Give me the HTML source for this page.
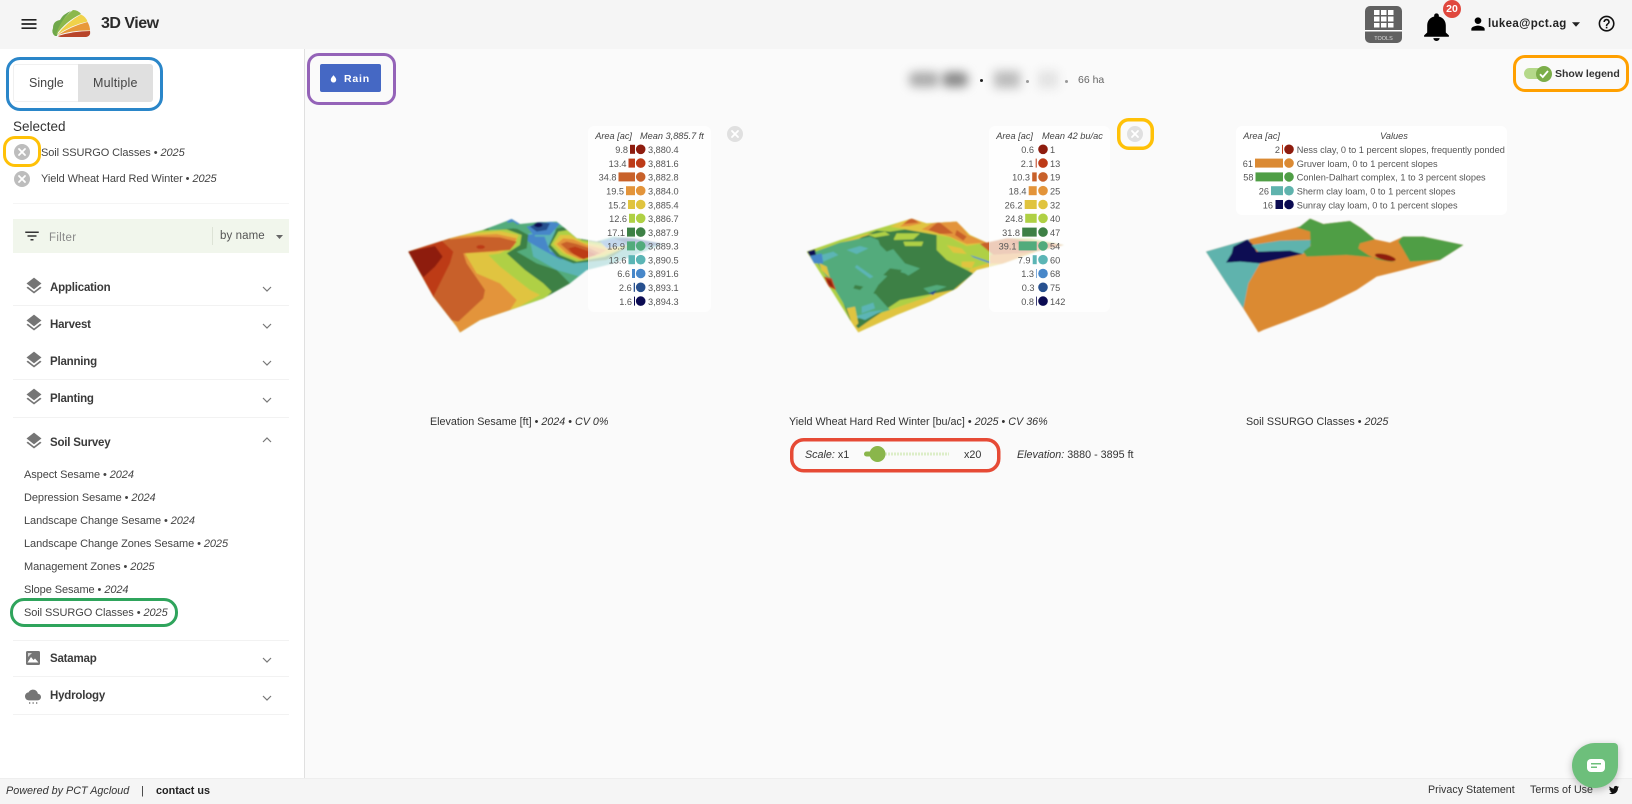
<!DOCTYPE html>
<html lang="en"><head><meta charset="utf-8"><title>3D View</title>
<style>
html,body{margin:0;padding:0}
body{width:1632px;height:804px;position:relative;overflow:hidden;background:#fafafa;font-family:"Liberation Sans",Arial,sans-serif;color:#333}
.a{position:absolute;white-space:nowrap;line-height:1}
svg{position:absolute;display:block}
.sec{font-size:11.5px;font-weight:bold;color:#3a3a3a;left:50px;letter-spacing:-.2px}
.it{font-size:11px;color:#444;left:24px;letter-spacing:-.08px}
.hr{position:absolute;left:13px;width:276px;height:1px;background:#f2f2f2}
.hl{position:absolute;box-sizing:border-box;border-style:solid;border-width:3.5px;background:transparent}
.cap{font-size:10.75px;color:#333}
i{font-style:italic}
</style></head><body>
<div class="a" style="left:0;top:0;width:1632px;height:49px;background:#f5f5f5"></div>
<div class="a" style="left:0;top:49px;width:304px;height:729px;background:#fff;border-right:1px solid #e0e0e0"></div>
<div class="a" style="left:0;top:778px;width:1632px;height:26px;background:#f5f5f5;border-top:1px solid #eee;box-sizing:border-box"></div>

<!-- header -->
<svg style="left:18.500px;top:14px" width="20" height="20" viewBox="0 0 24 24"><path fill="#222" d="M3 18h18v-2H3v2zm0-5h18v-2H3v2zm0-7v2h18V6H3z"/></svg>
<svg style="left:50px;top:8px" width="44" height="32" viewBox="50 8 44 32">
<path fill="#6fa84a" d="M55 36Q51 33 53 28Q53 21 60 20Q63 14 71 11Q60 21 57 36Z"/>
<path fill="#8cb84b" d="M56 35Q60 20 73 10Q78 10 81 14Q66 21 56 35Z"/>
<path fill="#f0d24a" d="M57 35Q67 22 81 14.500Q86 17 87.500 21.500Q71 25 57 35Z"/>
<path fill="#e8993a" d="M58 35Q72 26 87.500 22Q90 26 90 30.500Q72 30 58 35Z"/>
<path fill="#b8452a" d="M58 36Q74 31 90 31Q91 36 86 37L62 37Q59 37 58 36Z"/>
</svg>
<div class="a" style="left:101px;top:16px;font-size:16px;font-weight:bold;color:#2b2b2b;letter-spacing:-.5px">3D View</div>

<div class="a" style="left:1365px;top:6px;width:37px;height:37px;background:#616161;border-radius:5px"></div>
<svg style="left:1365px;top:6px" width="37" height="37" viewBox="0 0 37 37"><g fill="#fff"><rect x="9" y="4" width="5.500" height="5"/><rect x="16" y="4" width="5.500" height="5"/><rect x="23" y="4" width="5.500" height="5"/><rect x="9" y="10.500" width="5.500" height="5"/><rect x="16" y="10.500" width="5.500" height="5"/><rect x="23" y="10.500" width="5.500" height="5"/><rect x="9" y="17" width="5.500" height="4.500"/><rect x="16" y="17" width="5.500" height="4.500"/><rect x="23" y="17" width="5.500" height="4.500"/><rect x="0" y="24" width="37" height="1.500"/></g><text x="18.500" y="34" text-anchor="middle" font-size="5.500" fill="#ddd" font-family="Liberation Sans">TOOLS</text></svg>
<svg style="left:1421px;top:12px" width="31" height="29" viewBox="2 1.500 20 20.500" preserveAspectRatio="none"><path fill="#000" d="M12 22c1.100 0 2-.9 2-2h-4c0 1.100.89 2 2 2zm6-6v-5c0-3.070-1.640-5.640-4.500-6.320V4c0-.83-.67-1.500-1.500-1.500s-1.500.67-1.500 1.500v.68C7.630 5.360 6 7.920 6 11v5l-2 2v1h16v-1l-2-2z"/></svg>
<div class="a" style="left:1443px;top:0;width:18px;height:18px;border-radius:50%;background:#e0483e;color:#fff;font-size:10.500px;font-weight:bold;line-height:18px;text-align:center">20</div>
<svg style="left:1468px;top:14px" width="20" height="20" viewBox="0 0 24 24"><path fill="#000" d="M12 12c2.210 0 4-1.790 4-4s-1.790-4-4-4-4 1.790-4 4 1.790 4 4 4zm0 2c-2.670 0-8 1.340-8 4v2h16v-2c0-2.660-5.330-4-8-4z"/></svg>
<div class="a" style="left:1488px;top:19px;font-size:11.500px;font-weight:bold;color:#222;letter-spacing:.35px">lukea@pct.ag</div>
<svg style="left:1572px;top:22px" width="8" height="5" viewBox="0 0 9 5"><path fill="#222" d="M0 0h9L4.500 5z"/></svg>
<svg style="left:1597.400px;top:14.400px" width="19.200" height="19.200" viewBox="0 0 24 24"><path fill="#111" d="M11 18h2v-2h-2v2zm1-16C6.480 2 2 6.480 2 12s4.480 10 10 10 10-4.480 10-10S17.520 2 12 2zm0 18c-4.410 0-8-3.590-8-8s3.590-8 8-8 8 3.590 8 8-3.590 8-8 8zm0-14c-2.210 0-4 1.790-4 4h2c0-1.100.9-2 2-2s2 .9 2 2c0 2-3 1.750-3 5h2c0-2.250 3-2.500 3-5 0-2.210-1.790-4-4-4z"/></svg>

<!-- sidebar top -->
<div class="a" style="left:13px;top:64px;width:140px;height:38px;background:#fff;border:1px solid #f0f0f0;box-sizing:border-box;border-radius:3px"></div>
<div class="a" style="left:78px;top:64px;width:75px;height:38px;background:#e0e0e0;border-radius:0 3px 3px 0"></div>
<div class="a" style="left:29px;top:77px;font-size:12.500px;color:#444">Single</div>
<div class="a" style="left:93px;top:77px;font-size:12.500px;color:#444;letter-spacing:.2px">Multiple</div>
<div class="hl" style="left:6px;top:57px;width:157px;height:54px;border-color:#2a86c9;border-radius:14px"></div>
<div class="a" style="left:13px;top:120px;font-size:13.500px;color:#333">Selected</div>
<svg style="left:14px;top:144px" width="16" height="16" viewBox="0 0 16 16"><circle cx="8" cy="8" r="8" fill="#bdbdbd"/><path d="M5 5l6 6M11 5l-6 6" stroke="#fff" stroke-width="1.800" stroke-linecap="round"/></svg>
<svg style="left:14px;top:171px" width="16" height="16" viewBox="0 0 16 16"><circle cx="8" cy="8" r="8" fill="#bdbdbd"/><path d="M5 5l6 6M11 5l-6 6" stroke="#fff" stroke-width="1.800" stroke-linecap="round"/></svg>
<div class="hl" style="left:3px;top:136px;width:38px;height:31px;border-color:#ffc107;border-radius:12px"></div>
<div class="a it" style="left:41px;top:147.500px;color:#444">Soil SSURGO Classes • <i>2025</i></div>
<div class="a it" style="left:41px;top:173.500px;color:#444">Yield Wheat Hard Red Winter • <i>2025</i></div>
<div class="hr" style="top:203px;background:#f5f5f5"></div>
<div class="a" style="left:13px;top:219px;width:276px;height:34px;background:#f1f6ec"></div>
<svg style="left:22.750px;top:226.500px" width="18" height="18" viewBox="0 0 24 24"><path fill="#333" d="M10 18h4v-2h-4v2zM3 6v2h18V6H3zm3 7h12v-2H6v2z"/></svg>
<div class="a" style="left:49px;top:233px;font-size:11.500px;color:#888;letter-spacing:.3px">Filter</div>
<div class="a" style="left:212px;top:227px;width:1px;height:18px;background:#dde3d6"></div>
<div class="a" style="left:220px;top:231px;font-size:11.500px;color:#555;letter-spacing:.1px">by name</div>
<svg style="left:276px;top:235px" width="7" height="4" viewBox="0 0 7 4"><path fill="#666" d="M0 0h7L3.500 4z"/></svg>

<!-- sections -->
<svg width="0" height="0" style="left:0;top:0"><defs>
<path id="ly" fill="#757575" d="M11.990 18.540l-7.370-5.730L3 14.070l9 7 9-7-1.630-1.270-7.380 5.740zM12 16l7.360-5.730L21 9l-9-7-9 7 1.630 1.270L12 16z"/>
<path id="dn" fill="none" stroke="#777" stroke-width="1.200" d="M1 1l4 4 4-4"/>
</defs></svg>
<svg style="left:23.500px;top:276px" width="20" height="20" viewBox="0 0 24 24"><use href="#ly"/></svg><div class="a sec" style="top:282.500px">Application</div><svg style="left:262px;top:286px" width="10" height="7" viewBox="0 0 10 7"><use href="#dn"/></svg><div class="hr" style="top:305px"></div>
<svg style="left:23.500px;top:313px" width="20" height="20" viewBox="0 0 24 24"><use href="#ly"/></svg><div class="a sec" style="top:319.500px">Harvest</div><svg style="left:262px;top:323px" width="10" height="7" viewBox="0 0 10 7"><use href="#dn"/></svg>
<svg style="left:23.500px;top:350px" width="20" height="20" viewBox="0 0 24 24"><use href="#ly"/></svg><div class="a sec" style="top:356.500px">Planning</div><svg style="left:262px;top:360px" width="10" height="7" viewBox="0 0 10 7"><use href="#dn"/></svg><div class="hr" style="top:379px"></div>
<svg style="left:23.500px;top:387px" width="20" height="20" viewBox="0 0 24 24"><use href="#ly"/></svg><div class="a sec" style="top:393.500px">Planting</div><svg style="left:262px;top:397px" width="10" height="7" viewBox="0 0 10 7"><use href="#dn"/></svg><div class="hr" style="top:417px"></div>
<svg style="left:23.500px;top:431px" width="20" height="20" viewBox="0 0 24 24"><use href="#ly"/></svg><div class="a sec" style="top:437.500px">Soil Survey</div><svg style="left:262px;top:436px" width="10" height="7" viewBox="0 0 10 7"><path fill="none" stroke="#777" stroke-width="1.200" d="M1 6l4-4 4 4"/></svg>

<div class="a it" style="top:470px">Aspect Sesame • <i>2024</i></div>
<div class="a it" style="top:493px">Depression Sesame • <i>2024</i></div>
<div class="a it" style="top:516px">Landscape Change Sesame • <i>2024</i></div>
<div class="a it" style="top:539px">Landscape Change Zones Sesame • <i>2025</i></div>
<div class="a it" style="top:562px">Management Zones • <i>2025</i></div>
<div class="a it" style="top:585px">Slope Sesame • <i>2024</i></div>
<div class="a it" style="top:607.500px">Soil SSURGO Classes • <i>2025</i></div>
<div class="hl" style="left:10px;top:598px;width:168px;height:29px;border-color:#2fa45c;border-radius:14px"></div>
<div class="hr" style="top:640px"></div>
<svg style="left:26px;top:651px" width="14" height="14" viewBox="0 0 14 14"><rect width="14" height="14" rx="1.500" fill="#757575"/><path fill="#fff" d="M1.500 11.500L5 6l2.500 3 1.500-1.500 3.500 4z"/><path fill="#fff" d="M2 2h4L2 6z" opacity=".7"/></svg>
<div class="a sec" style="top:653.500px">Satamap</div><svg style="left:262px;top:657px" width="10" height="7" viewBox="0 0 10 7"><use href="#dn"/></svg><div class="hr" style="top:676px"></div>
<svg style="left:25px;top:687px" width="16" height="16" viewBox="0 0 24 24"><path fill="#757575" d="M19.350 10.040C18.670 6.590 15.640 4 12 4 9.110 4 6.600 5.640 5.350 8.040 2.340 8.360 0 10.910 0 14c0 3.310 2.690 6 6 6h13c2.760 0 5-2.240 5-5 0-2.640-2.050-4.780-4.650-4.960z"/></svg>
<svg style="left:29px;top:702px" width="9" height="3" viewBox="0 0 9 3"><g fill="#999"><rect x="0" width="1.300" height="2"/><rect x="3.500" width="1.300" height="2"/><rect x="7" width="1.300" height="2"/></g></svg>
<div class="a sec" style="top:690.500px">Hydrology</div><svg style="left:262px;top:695px" width="10" height="7" viewBox="0 0 10 7"><use href="#dn"/></svg><div class="hr" style="top:714px"></div>

<!-- footer -->
<div class="a" style="left:6px;top:786px;font-size:10.800px;font-style:italic;color:#333">Powered by PCT Agcloud</div>
<div class="a" style="left:141px;top:786px;font-size:11px;color:#333">|</div>
<div class="a" style="left:156px;top:786px;font-size:10.800px;font-weight:bold;color:#222">contact us</div>
<div class="a" style="left:1428px;top:785px;font-size:10.700px;color:#333">Privacy Statement</div>
<div class="a" style="left:1530px;top:785px;font-size:10.700px;color:#333">Terms of Use</div>
<svg style="left:1609px;top:785px" width="10" height="10" viewBox="0 0 24 24"><path fill="#111" d="M23.953 4.570a10 10 0 01-2.825.775 4.958 4.958 0 002.163-2.723c-.951.555-2.005.959-3.127 1.184a4.920 4.920 0 00-8.384 4.482C7.690 8.095 4.067 6.130 1.640 3.162a4.822 4.822 0 00-.666 2.475c0 1.710.870 3.213 2.188 4.096a4.904 4.904 0 01-2.228-.616v.060a4.923 4.923 0 003.946 4.827 4.996 4.996 0 01-2.212.085 4.936 4.936 0 004.604 3.417 9.867 9.867 0 01-6.102 2.105c-.39 0-.779-.023-1.170-.067a13.995 13.995 0 007.557 2.209c9.053 0 13.998-7.496 13.998-13.985 0-.21 0-.42-.015-.63A9.935 9.935 0 0024 4.590z"/></svg>

<!-- main top -->
<div class="a" style="left:320px;top:64px;width:61px;height:28px;background:#4568c4;border-radius:2px"></div>
<svg style="left:330px;top:75px" width="7" height="8" viewBox="0 0 9 10"><path fill="#fff" d="M4.500 0C3 2 1 3.800 1 6a3.500 3.500 0 007 0C8 3.800 6 2 4.500 0z"/></svg>
<div class="a" style="left:344px;top:73.500px;font-size:10.500px;font-weight:bold;color:#fff;letter-spacing:.8px">Rain</div>
<div class="hl" style="left:307px;top:53px;width:89px;height:52px;border-color:#9463b8;border-radius:12px"></div>

<div class="a" style="left:909px;top:72px;width:30px;height:15px;background:#aaa;filter:blur(5px);border-radius:6px"></div>
<div class="a" style="left:942px;top:72px;width:26px;height:15px;background:#888;filter:blur(5px);border-radius:6px"></div>
<div class="a" style="left:980px;top:79px;width:3px;height:3px;background:#222;border-radius:50%"></div>
<div class="a" style="left:994px;top:71px;width:26px;height:17px;background:#bbb;filter:blur(5px)"></div>
<div class="a" style="left:1026px;top:80px;width:3px;height:3px;background:#999;border-radius:50%"></div>
<div class="a" style="left:1038px;top:71px;width:20px;height:17px;background:#e2e2e2;filter:blur(5px)"></div>
<div class="a" style="left:1065px;top:80px;width:3px;height:3px;background:#999;border-radius:50%"></div>
<div class="a" style="left:1078px;top:75px;font-size:10.500px;color:#666">66 ha</div>

<div class="a" style="left:1524px;top:68px;width:26px;height:11px;background:#b5d98a;border-radius:6px"></div>
<svg style="left:1536px;top:66px" width="16" height="16" viewBox="0 0 16 16"><circle cx="8" cy="8" r="8" fill="#7cae4a"/><path d="M4 8.200l2.800 2.800L12 5" fill="none" stroke="#fff" stroke-width="1.800"/></svg>
<div class="a" style="left:1555px;top:69px;font-size:10.500px;font-weight:bold;color:#333">Show legend</div>
<div class="hl" style="left:1513px;top:55px;width:116px;height:37px;border-color:#ffa000;border-radius:12px"></div>

<!-- maps + legends -->
<svg style="left:0;top:0" width="1632" height="804" viewBox="0 0 1632 804" font-family="Liberation Sans" font-size="9.200" fill="#555">
<defs>
<clipPath id="c1"><path d="M25 395L150 355 250 330 335 297 360 312 410 307 470 305 495 325 530 355 590 365 640 350 700 355 790 372 730 395 640 430 560 450 510 490 430 535 330 570 240 600 180 637 170 620 100 530 50 440Z"/></clipPath>
<clipPath id="c2"><path d="M50 395L150 360 250 330 365 296 410 310 500 305 540 345 590 368 650 355 720 355 822 375 740 395 640 430 560 450 500 505 420 545 320 585 220 630 205 637 180 600 130 520Z"/></clipPath>
<clipPath id="c3"><path d="M48 395L170 360 330 320 360 296 400 312 480 303 515 325 555 358 600 368 640 350 700 350 820 375 750 420 640 450 560 470 500 510 400 560 300 600 220 630 205 637 160 565 110 490Z"/></clipPath>
<filter id="sf" x="-5%" y="-5%" width="110%" height="110%"><feGaussianBlur stdDeviation="2.200"/></filter>
</defs>

<g transform="translate(400 120) scale(.33333)"><g filter="url(#sf)"><g clip-path="url(#c1)">
<rect x="0" y="280" width="820" height="370" fill="#52ab7c"/>
<path fill="#5bb5b5" d="M385 340L560 330 800 360 700 430 540 470 470 450 400 410Z"/>
<path fill="#4787c9" d="M375 345L430 340 450 395 520 410 530 420 480 418 420 385 385 365Z"/>
<path fill="#5bb5b5" d="M400 325L460 320 470 340 440 350 405 350Z"/>
<path fill="#4787c9" d="M380 320L450 305 480 310 450 345 400 345Z"/>
<path fill="#27508f" d="M390 320L415 305 450 310 440 330 410 335Z"/>
<ellipse cx="415" cy="315" rx="13" ry="7" fill="#0b0b52"/>
<path fill="#4787c9" d="M320 305L340 290 360 310 340 320Z"/>
<path fill="#3d8045" d="M0 280L245 280 260 322 340 320 385 345 380 385 350 395 410 430 470 450 510 490 430 545 180 650 0 500Z"/>
<path fill="#52ab7c" d="M262 322L340 305 375 330 340 325 270 332Z"/>
<path fill="#afd044" d="M0 280L215 280 240 332 320 328 365 345 360 375 320 400 375 450 430 490 455 515 430 540 180 650 0 500Z"/>
<path fill="#e0c43f" d="M0 280L190 280 212 340 300 333 355 345 345 375 300 400 265 405 300 440 390 510 420 525 340 570 180 650 0 500Z"/>
<path fill="#e3943a" d="M0 280L170 280 182 348 290 342 350 355 340 380 290 395 195 400 230 460 300 490 350 540 330 570 180 650 0 500Z"/>
<path fill="#c8612a" d="M0 280L140 280 150 358 235 350 300 352 350 365 330 390 260 395 190 400 200 430 255 510 250 535 175 605 150 600 0 500Z"/>
<path fill="#bd3a17" d="M0 280L110 280 125 362 160 395 150 430 130 470 100 530 90 530 0 420Z"/>
<path fill="#8e1c0e" d="M20 395L105 378 128 410 105 440 70 472 40 430Z"/>
<ellipse cx="242" cy="381" rx="13" ry="6" fill="#bd3a17"/>
<path fill="#3d8045" d="M445 380L470 325 500 320 540 355 620 365 700 370 620 420 520 430 470 410Z"/>
<path fill="#afd044" d="M452 375L475 335 505 330 545 360 620 372 690 375 615 410 530 425 480 405Z"/>
<path fill="#e0c43f" d="M460 372L480 345 510 345 550 368 620 380 670 385 610 405 540 420 490 400Z"/>
<path fill="#e3943a" d="M470 372L490 355 520 358 560 375 620 390 600 402 540 418 500 400Z"/>
<path fill="#c8612a" d="M482 372L500 365 530 372 570 385 600 400 545 415 510 398Z"/>
<path fill="#bd3a17" d="M505 385L525 380 570 395 590 405 550 418 520 402Z"/>
<path fill="#27508f" d="M640 355L700 352 790 372 720 385 680 370Z"/>
<path fill="#4787c9" d="M600 365L640 355 690 375 620 385Z"/>
</g></g></g>

<g transform="translate(790 120) scale(.33333)"><g filter="url(#sf)"><g clip-path="url(#c2)">
<rect x="0" y="280" width="840" height="370" fill="#afd044"/>
<path fill="#e0c43f" d="M300 320L365 290 410 305 500 300 550 345 590 368 530 378 480 352 420 340Z"/>
<path fill="#e0c43f" d="M180 615L300 570 420 528 500 480 545 445 640 415 700 400 740 395 640 430 560 450 500 505 420 545 320 585 205 645Z"/>
<path fill="#e0c43f" d="M470 375L515 385 530 402 490 398ZM515 425L555 425 545 445 515 440Z"/>
<path fill="#e3943a" d="M330 320L365 290 395 310 360 318ZM395 328L445 300 505 305 535 345 590 368 530 372 480 350 440 338Z"/>
<path fill="#c8612a" d="M340 312L365 292 385 308ZM415 330L445 305 465 320 490 340 450 342ZM500 330L530 350 520 362 495 345Z"/>
<path fill="#c8612a" d="M570 372L640 352 822 375 720 398 610 405Z"/>
<path fill="#e3943a" d="M600 405L720 398 640 432 600 430Z"/>
<path fill="#bd3a17" d="M660 365L740 365 800 374 720 382Z"/>
<path fill="#3d8045" d="M225 345L260 332 300 335 345 328 440 345 440 390 470 420 550 460 490 510 330 540 240 600 205 625 180 600 140 500 140 400Z"/>
<path fill="#e0c43f" d="M90 388L230 342 250 340 150 372Z"/>
<path fill="#afd044" d="M235 345L285 335 300 345 255 352ZM320 340L390 340 370 358 310 360ZM270 395L300 392 295 405 265 403ZM340 365L400 365 395 378 345 378Z"/>
<path fill="#52ab7c" d="M62 400L150 368 240 350 300 375 320 400 345 430 390 445 350 470 300 480 265 495 255 520 300 570 225 590 190 600 130 500Z"/>
<path fill="#3d8045" d="M265 495L310 450 345 460 375 480 440 450 470 465 400 510 340 535 290 530 250 520ZM300 445L335 450 320 475 280 465ZM195 495L220 500 210 510 190 505ZM262 352L300 345 330 380 290 395 270 375Z"/>
<path fill="#5bb5b5" d="M75 410L130 395 145 405 100 425ZM170 390L210 378 235 385 200 402ZM195 590L240 575 280 570 225 600ZM215 560L250 548 255 565 215 580ZM200 435L250 470 240 475 195 442Z"/>
<path fill="#52ab7c" d="M400 505L440 495 470 500 420 520Z"/>
<path fill="#27508f" d="M415 520L440 510 430 525Z"/>
<path fill="#0b0b52" d="M52 395L75 388 78 405 60 408Z"/>
<path fill="#4787c9" d="M60 408L95 400 100 430 72 430Z"/>
<path fill="#e0c43f" d="M88 430L110 440 120 475 95 450Z"/>
<path fill="#bd3a17" d="M102 470L125 475 138 510 115 500Z"/>
<path fill="#8e1c0e" d="M110 478L122 482 130 502 118 495Z"/>
<path fill="#e0c43f" d="M170 565L195 560 205 610 190 625Z"/>
<path fill="#4787c9" d="M540 405L600 425 600 430 550 412Z"/>
</g></g></g>

<g transform="translate(1190 120) scale(.33333)"><g filter="url(#sf)"><g clip-path="url(#c3)">
<rect x="0" y="280" width="840" height="370" fill="#db8a33"/>
<path fill="#5fb3ad" d="M0 390L175 355 210 430 175 490 160 565 205 640 225 640 205 660 0 500Z"/>
<path fill="#0b0b52" d="M108 428L125 400 130 380 172 358 190 375 200 395 300 390 338 402 210 430 150 425Z"/>
<path fill="#5fb3ad" d="M185 375L270 362 362 360 360 385 338 402 300 392 205 395Z"/>
<path fill="#4f9e45" d="M318 322L355 290 400 312 480 300 515 325 555 358 510 370 505 385 535 405 560 418 620 428 550 412 470 405 350 410 340 395 362 378 360 335Z"/>
<path fill="#4f9e45" d="M625 365L640 345 700 345 825 375 750 420 660 425 640 390Z"/>
<ellipse cx="586" cy="412" rx="32" ry="9" transform="rotate(14 586 412)" fill="#8e1c0e"/>
</g></g></g>

<!-- legend 1 -->
<rect x="588" y="126" width="123" height="186" rx="6" fill="#fff" fill-opacity=".68"/>
<text x="632" y="139" text-anchor="end" font-style="italic" fill="#444">Area [ac]</text><text x="640" y="139" font-style="italic" fill="#444">Mean 3,885.7 ft</text>
<g text-anchor="end">
<text x="628" y="153">9.8</text><text x="626.500" y="167">13.4</text><text x="616.500" y="180.500">34.8</text><text x="624" y="194.500">19.5</text><text x="626" y="208.500">15.2</text><text x="627" y="222">12.6</text><text x="625" y="236">17.1</text><text x="625" y="249.500">16.9</text><text x="626.500" y="263.500">13.6</text><text x="630" y="277">6.6</text><text x="631.700" y="291">2.6</text><text x="632" y="305">1.6</text></g>
<g><rect x="630" y="144.800" width="5" height="9" fill="#8e1c0e"/><rect x="628.500" y="158.600" width="6.500" height="9" fill="#bd3a17"/><rect x="618.500" y="172.400" width="16.500" height="9" fill="#c8612a"/><rect x="626" y="186.200" width="9" height="9" fill="#e3943a"/><rect x="628" y="200" width="7" height="9" fill="#e0c43f"/><rect x="629" y="213.800" width="6" height="9" fill="#afd044"/><rect x="627" y="227.600" width="8" height="9" fill="#3d8045"/><rect x="627" y="241.400" width="8" height="9" fill="#52ab7c"/><rect x="628.500" y="255.200" width="6.500" height="9" fill="#5bb5b5"/><rect x="632" y="269" width="3" height="9" fill="#4787c9"/><rect x="633.700" y="282.800" width="1.300" height="9" fill="#27508f"/><rect x="634" y="296.600" width="1" height="9" fill="#0b0b52"/></g>
<g><circle cx="640.700" cy="149.300" r="4.800" fill="#8e1c0e"/><circle cx="640.700" cy="163.100" r="4.800" fill="#bd3a17"/><circle cx="640.700" cy="176.900" r="4.800" fill="#c8612a"/><circle cx="640.700" cy="190.700" r="4.800" fill="#e3943a"/><circle cx="640.700" cy="204.500" r="4.800" fill="#e0c43f"/><circle cx="640.700" cy="218.300" r="4.800" fill="#afd044"/><circle cx="640.700" cy="232.100" r="4.800" fill="#3d8045"/><circle cx="640.700" cy="245.900" r="4.800" fill="#52ab7c"/><circle cx="640.700" cy="259.700" r="4.800" fill="#5bb5b5"/><circle cx="640.700" cy="273.500" r="4.800" fill="#4787c9"/><circle cx="640.700" cy="287.300" r="4.800" fill="#27508f"/><circle cx="640.700" cy="301.100" r="4.800" fill="#0b0b52"/></g>
<g><text x="648" y="153">3,880.4</text><text x="648" y="167">3,881.6</text><text x="648" y="180.500">3,882.8</text><text x="648" y="194.500">3,884.0</text><text x="648" y="208.500">3,885.4</text><text x="648" y="222">3,886.7</text><text x="648" y="236">3,887.9</text><text x="648" y="249.500">3,889.3</text><text x="648" y="263.500">3,890.5</text><text x="648" y="277">3,891.6</text><text x="648" y="291">3,893.1</text><text x="648" y="305">3,894.3</text></g>

<!-- legend 2 -->
<rect x="989" y="126" width="121" height="186" rx="6" fill="#fff" fill-opacity=".68"/>
<text x="1033" y="139" text-anchor="end" font-style="italic" fill="#444">Area [ac]</text><text x="1042" y="139" font-style="italic" fill="#444">Mean 42 bu/ac</text>
<g text-anchor="end">
<text x="1034" y="153">0.6</text><text x="1033.500" y="167">2.1</text><text x="1030" y="180.500">10.3</text><text x="1026.500" y="194.500">18.4</text><text x="1022.500" y="208.500">26.2</text><text x="1023" y="222">24.8</text><text x="1020" y="236">31.8</text><text x="1016.500" y="249.500">39.1</text><text x="1030.500" y="263.500">7.9</text><text x="1034" y="277">1.3</text><text x="1034.500" y="291">0.3</text><text x="1034" y="305">0.8</text></g>
<g><rect x="1035.700" y="158.600" width="1" height="9" fill="#bd3a17"/><rect x="1032.200" y="172.400" width="4.500" height="9" fill="#c8612a"/><rect x="1028.700" y="186.200" width="8" height="9" fill="#e3943a"/><rect x="1024.700" y="200" width="12" height="9" fill="#e0c43f"/><rect x="1025.200" y="213.800" width="11.500" height="9" fill="#afd044"/><rect x="1022.200" y="227.600" width="14.500" height="9" fill="#3d8045"/><rect x="1018.700" y="241.400" width="18" height="9" fill="#52ab7c"/><rect x="1032.700" y="255.200" width="4" height="9" fill="#5bb5b5"/><rect x="1036" y="269" width=".7" height="9" fill="#4787c9"/><rect x="1036" y="296.600" width=".8" height="9" fill="#0b0b52"/></g>
<g><circle cx="1043" cy="149.300" r="4.800" fill="#8e1c0e"/><circle cx="1043" cy="163.100" r="4.800" fill="#bd3a17"/><circle cx="1043" cy="176.900" r="4.800" fill="#c8612a"/><circle cx="1043" cy="190.700" r="4.800" fill="#e3943a"/><circle cx="1043" cy="204.500" r="4.800" fill="#e0c43f"/><circle cx="1043" cy="218.300" r="4.800" fill="#afd044"/><circle cx="1043" cy="232.100" r="4.800" fill="#3d8045"/><circle cx="1043" cy="245.900" r="4.800" fill="#52ab7c"/><circle cx="1043" cy="259.700" r="4.800" fill="#5bb5b5"/><circle cx="1043" cy="273.500" r="4.800" fill="#4787c9"/><circle cx="1043" cy="287.300" r="4.800" fill="#27508f"/><circle cx="1043" cy="301.100" r="4.800" fill="#0b0b52"/></g>
<g><text x="1050" y="153">1</text><text x="1050" y="167">13</text><text x="1050" y="180.500">19</text><text x="1050" y="194.500">25</text><text x="1050" y="208.500">32</text><text x="1050" y="222">40</text><text x="1050" y="236">47</text><text x="1050" y="249.500">54</text><text x="1050" y="263.500">60</text><text x="1050" y="277">68</text><text x="1050" y="291">75</text><text x="1050" y="305">142</text></g>

<!-- legend 3 -->
<rect x="1236" y="126" width="271" height="89" rx="6" fill="#fff"/>
<text x="1280" y="139" text-anchor="end" font-style="italic" fill="#444">Area [ac]</text><text x="1394" y="139" text-anchor="middle" font-style="italic" fill="#444">Values</text>
<g text-anchor="end"><text x="1280" y="153">2</text><text x="1253" y="167">61</text><text x="1253.500" y="180.500">58</text><text x="1269" y="194.500">26</text><text x="1273" y="208.500">16</text></g>
<rect x="1282" y="144.800" width="1" height="9" fill="#bd3a17"/><rect x="1255" y="158.600" width="28" height="9" fill="#db8a33"/><rect x="1255.500" y="172.400" width="27.500" height="9" fill="#4f9e45"/><rect x="1271" y="186.200" width="12" height="9" fill="#5fb3ad"/><rect x="1275.500" y="200" width="7.500" height="9" fill="#0b0b52"/>
<circle cx="1289" cy="149.300" r="4.800" fill="#8e1c0e"/><circle cx="1289" cy="163.100" r="4.800" fill="#db8a33"/><circle cx="1289" cy="176.900" r="4.800" fill="#4f9e45"/><circle cx="1289" cy="190.700" r="4.800" fill="#5fb3ad"/><circle cx="1289" cy="204.500" r="4.800" fill="#0b0b52"/>
<text x="1296.700" y="153">Ness clay, 0 to 1 percent slopes, frequently ponded</text>
<text x="1296.700" y="167">Gruver loam, 0 to 1 percent slopes</text>
<text x="1296.700" y="180.500">Conlen-Dalhart complex, 1 to 3 percent slopes</text>
<text x="1296.700" y="194.500">Sherm clay loam, 0 to 1 percent slopes</text>
<text x="1296.700" y="208.500">Sunray clay loam, 0 to 1 percent slopes</text>

<!-- close icons -->
<circle cx="735" cy="134" r="8" fill="#e0e0e0"/><path d="M732 131l6 6M738 131l-6 6" stroke="#fff" stroke-width="1.800" stroke-linecap="round"/>
<circle cx="1135" cy="134" r="8" fill="#e0e0e0"/><path d="M1132 131l6 6M1138 131l-6 6" stroke="#fff" stroke-width="1.800" stroke-linecap="round"/>
<rect x="1118.750" y="119.750" width="33.500" height="28.500" rx="10" fill="none" stroke="#ffc107" stroke-width="3.500"/>

<!-- slider -->
<line x1="885" y1="454" x2="949" y2="454" stroke="#dcedc8" stroke-width="3" stroke-dasharray="2 1"/>
<rect x="864" y="451.500" width="14" height="5" rx="2.500" fill="#8ab64b"/>
<circle cx="877.500" cy="454" r="8" fill="#8ab64b"/>
<rect x="791.750" y="439.750" width="207" height="31" rx="12" fill="none" stroke="#e64a35" stroke-width="3.500"/>
</svg>

<!-- captions -->
<div class="a cap" style="left:430px;top:416.500px">Elevation Sesame [ft] • <i>2024</i> • <i>CV 0%</i></div>
<div class="a cap" style="left:789px;top:416.500px">Yield Wheat Hard Red Winter [bu/ac] • <i>2025</i> • <i>CV 36%</i></div>
<div class="a cap" style="left:1246px;top:416.500px">Soil SSURGO Classes • <i>2025</i></div>
<div class="a cap" style="left:805px;top:450px"><i>Scale:</i> x1</div>
<div class="a cap" style="left:964px;top:450px">x20</div>
<div class="a cap" style="left:1017px;top:450px"><i>Elevation:</i> 3880 - 3895 ft</div>

<!-- chat -->
<div class="a" style="left:1572px;top:743px;width:46px;height:45px;background:#6dbf7b;border-radius:50% 4px 50% 50%;box-shadow:0 2px 8px rgba(0,0,0,.25)"></div>
<svg style="left:1587px;top:759px" width="18" height="14" viewBox="0 0 18 14"><rect width="18" height="13" rx="4" fill="#fff"/><rect x="4" y="4" width="10" height="1.500" fill="#6dbf7b"/><rect x="4" y="7.500" width="6" height="1.500" fill="#6dbf7b"/></svg>
</body></html>
